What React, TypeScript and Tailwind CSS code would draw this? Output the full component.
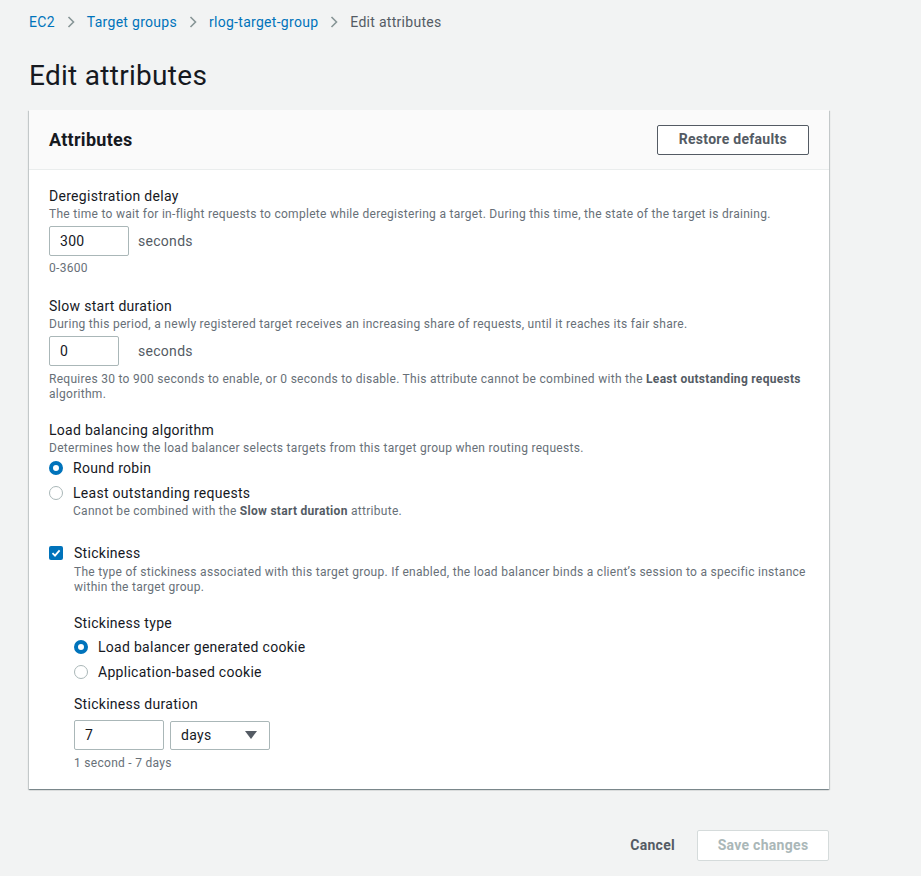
const font = "font-['Roboto','Liberation_Sans',sans-serif] tracking-[0.018em]";

function Radio({ checked, label, hint }: { checked?: boolean; label: string; hint?: React.ReactNode }) {
  return (
    <div className="flex items-start gap-[10px]">
      <span
        className={
          "mt-[3px] w-[14px] h-[14px] rounded-full shrink-0 " +
          (checked ? "border-[4px] border-[#0073bb] bg-white" : "border border-[#aab7b8] bg-white")
        }
      />
      <div>
        <div className="text-[14px] leading-[20px] text-[#16191f]">{label}</div>
        {hint && <div className="text-[12px] leading-[16px] text-[#687078]">{hint}</div>}
      </div>
    </div>
  );
}

function Field({ label, desc, children }: { label: string; desc?: React.ReactNode; children: React.ReactNode }) {
  return (
    <div>
      <div className="text-[14px] leading-[20px] text-[#16191f]">{label}</div>
      {desc && <div className="text-[12px] leading-[16px] text-[#687078]">{desc}</div>}
      <div className="mt-[4px]">{children}</div>
    </div>
  );
}

function Input({ value, width }: { value: string; width: string }) {
  return (
    <div className={"h-[30px] border border-[#aab7b8] rounded-[2px] bg-white px-[10px] flex items-center text-[14px] text-[#16191f] " + width}>
      {value}
    </div>
  );
}

export default function App() {
  return (
    <div className={"min-h-[876px] w-full bg-[#f2f3f3] " + font}>
      <div className="pl-[29px] pt-[12px] w-[829px]">
        {/* breadcrumb */}
        <div className="flex items-center gap-[12px] text-[14px] leading-[20px]">
          <span className="text-[#0073bb]">EC2</span>
          <Chevron />
          <span className="text-[#0073bb]">Target groups</span>
          <Chevron />
          <span className="text-[#0073bb]">rlog-target-group</span>
          <Chevron />
          <span className="text-[#545b64]">Edit attributes</span>
        </div>

        <h1 className="mt-[26px] text-[28px] leading-[36px] text-[#16191f]">Edit attributes</h1>

        {/* card */}
        <div className="mt-[16px] bg-white shadow-[0_1px_1px_0_rgba(0,28,36,0.3),1px_1px_1px_0_rgba(0,28,36,0.15),-1px_1px_1px_0_rgba(0,28,36,0.15)]">
          <div className="h-[60px] bg-[#fafafa] border-b border-[#eaeded] px-[20px] flex items-center justify-between">
            <h2 className="text-[18px] font-bold text-[#16191f]">Attributes</h2>
            <button className="h-[30px] px-[21px] border border-[#545b64] rounded-[2px] bg-white text-[14px] font-bold text-[#545b64]">
              Restore defaults
            </button>
          </div>

          <div className="px-[20px] pt-[16px] pb-[18px] flex flex-col">
            <Field
              label="Deregistration delay"
              desc="The time to wait for in-flight requests to complete while deregistering a target. During this time, the state of the target is draining."
            >
              <div className="flex items-center">
                <Input value="300" width="w-[80px]" />
                <span className="ml-[9px] text-[14px] text-[#545b64]">seconds</span>
              </div>
              <div className="mt-[4px] text-[12px] leading-[16px] text-[#687078]">0-3600</div>
            </Field>

            <div className="mt-[20px]">
              <Field
                label="Slow start duration"
                desc="During this period, a newly registered target receives an increasing share of requests, until it reaches its fair share."
              >
                <div className="flex items-center">
                  <Input value="0" width="w-[70px]" />
                  <span className="ml-[19px] text-[14px] text-[#545b64]">seconds</span>
                </div>
                <div className="mt-[6px] text-[12px] leading-[15px] text-[#687078]">
                  Requires 30 to 900 seconds to enable, or 0 seconds to disable. This attribute cannot be combined with the{" "}
                  <b className="text-[#545b64]">Least outstanding requests</b> algorithm.
                </div>
              </Field>
            </div>

            <div className="mt-[18px]">
              <div className="text-[14px] leading-[20px] text-[#16191f]">Load balancing algorithm</div>
              <div className="text-[12px] leading-[16px] text-[#687078]">
                Determines how the load balancer selects targets from this target group when routing requests.
              </div>
              <div className="mt-[2px] flex flex-col gap-[5px]">
                <Radio checked label="Round robin" />
                <Radio
                  label="Least outstanding requests"
                  hint={
                    <>
                      Cannot be combined with the <b className="text-[#545b64]">Slow start duration</b> attribute.
                    </>
                  }
                />
              </div>
            </div>

            <div className="mt-[24px] flex items-start gap-[10px]">
              <span className="mt-[3px] w-[14px] h-[14px] rounded-[2px] bg-[#0073bb] flex items-center justify-center shrink-0">
                <svg width="10" height="10" viewBox="0 0 10 10">
                  <path d="M1.5 5.2 L4 7.6 L8.6 2.4" fill="none" stroke="white" strokeWidth="1.8" />
                </svg>
              </span>
              <div className="ml-[1px]">
                <div className="text-[14px] leading-[20px] text-[#16191f]">Stickiness</div>
                <div className="mt-[2px] text-[12px] leading-[15px] text-[#687078]">
                  The type of stickiness associated with this target group. If enabled, the load balancer binds a client’s session to a specific instance within the target group.
                </div>

                <div className="mt-[18px] text-[14px] leading-[20px] text-[#16191f]">Stickiness type</div>
                <div className="mt-[4px] flex flex-col gap-[5px]">
                  <Radio checked label="Load balancer generated cookie" />
                  <Radio label="Application-based cookie" />
                </div>

                <div className="mt-[12px] text-[14px] leading-[20px] text-[#16191f]">Stickiness duration</div>
                <div className="mt-[6px] flex items-center gap-[6px]">
                  <Input value="7" width="w-[90px] h-[29px]" />
                  <div className="w-[100px] h-[29px] border border-[#aab7b8] rounded-[2px] bg-white pl-[10px] pr-[12px] flex items-center justify-between text-[14px] text-[#16191f]">
                    <span>days</span>
                    <svg width="12" height="8" viewBox="0 0 12 8">
                      <path d="M0 0 H12 L6 8 Z" fill="#545b64" />
                    </svg>
                  </div>
                </div>
                <div className="mt-[5px] text-[12px] leading-[16px] text-[#687078]">1 second - 7 days</div>
              </div>
            </div>
          </div>
        </div>

        {/* footer */}
        <div className="mt-[41px] flex items-center justify-end gap-[22px]">
          <span className="text-[14px] font-bold text-[#545b64]">Cancel</span>
          <button className="h-[31px] w-[132px] border border-[#d5dbdb] rounded-[2px] bg-white text-[14px] font-bold text-[#aab7b8]">
            Save changes
          </button>
        </div>
      </div>
    </div>
  );
}

function Chevron() {
  return (
    <svg width="8" height="12" viewBox="0 0 8 12">
      <path d="M1.5 1 L6.5 6 L1.5 11" fill="none" stroke="#879596" strokeWidth="1.6" />
    </svg>
  );
}
